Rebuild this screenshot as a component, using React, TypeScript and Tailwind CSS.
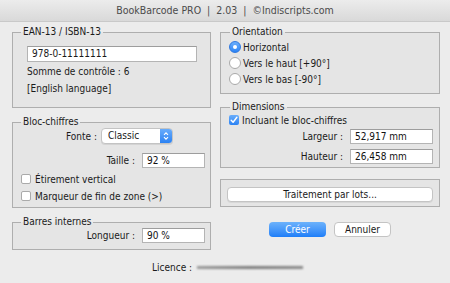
import React from "react";

const font = { fontFamily: '"DejaVu Sans Condensed", "DejaVu Sans", sans-serif' };

function TextBox({ value, w }: { value: string; w: string }) {
  return (
    <div
      className={`${w} h-[15px] border border-[#b4b4b4] border-t-[#9d9d9d] bg-white pl-[4px] text-[10px] leading-[13px] text-[#111]`}
    >
      {value}
    </div>
  );
}

function Radio({ on }: { on?: boolean }) {
  return on ? (
    <div className="flex h-[12px] w-[12px] items-center justify-center rounded-full border border-[#2e78e0] bg-gradient-to-b from-[#6aaefc] to-[#2a84f5]">
      <div className="h-[4px] w-[4px] rounded-full bg-white" />
    </div>
  ) : (
    <div className="h-[12px] w-[12px] rounded-full border border-[#a9a9a9] bg-white" />
  );
}

function Check({ on }: { on?: boolean }) {
  return on ? (
    <div className="flex h-[10px] w-[10px] items-center justify-center rounded-[2px] bg-gradient-to-b from-[#69adfb] to-[#2a82f3]">
      <svg width="8" height="8" viewBox="0 0 8 8">
        <path d="M1.2 4.2 L3.1 6.2 L6.9 1.3" stroke="white" strokeWidth="1.4" fill="none" strokeLinecap="round" strokeLinejoin="round" />
      </svg>
    </div>
  ) : (
    <div className="h-[10px] w-[10px] rounded-[2px] border border-[#aaaaaa] bg-white" />
  );
}

function Legend({ children, ml }: { children: React.ReactNode; ml: string }) {
  return (
    <legend className={`${ml} px-[2px] text-[10px] leading-[14px] text-[#1a1a1a]`}>{children}</legend>
  );
}

export default function App() {
  return (
    <div className="h-[283px] w-[450px] overflow-hidden bg-[#ececec] text-[#1a1a1a]" style={font}>
      <div className="flex h-[22px] items-center justify-center border-b border-[#c9c9c9] bg-gradient-to-b from-[#ececec] to-[#d9d9d9] text-[10.5px] text-[#4b4b4b]">
        BookBarcode PRO &nbsp;|&nbsp; 2.03 &nbsp;|&nbsp; ©Indiscripts.com
      </div>
      <div className="flex gap-[9px] pl-[12px] pt-[3px]">
        {/* Left column */}
        <div className="flex w-[199px] flex-col gap-[7px]">
          <fieldset className="h-[83px] border border-[#aeaeae] bg-[#e5e5e5]">
            <Legend ml="ml-[8px]">EAN-13 / ISBN-13</Legend>
            <div className="ml-[14px] mt-[7px]">
              <div className="h-[16px] w-[170px] border border-[#b4b4b4] border-t-[#9d9d9d] bg-white pl-[4px] text-[10px] leading-[14px]">
                978-0-11111111
              </div>
              <div className="mt-[2px] text-[10px] leading-[16px]">Somme de contrôle : 6</div>
              <div className="mt-[1px] text-[10px] leading-[16px]">[English language]</div>
            </div>
          </fieldset>
          <fieldset className="h-[93px] border border-[#aeaeae] bg-[#e5e5e5]">
            <Legend ml="ml-[8px]">Bloc-chiffres</Legend>
            <div className="-mt-[1px] flex items-center">
              <div className="w-[84px] text-right text-[10px]">Fonte :</div>
              <div className="ml-[4px] flex h-[16px] w-[72px] overflow-hidden rounded-[4px] border border-[#c3c3c3] bg-white shadow-[0_1px_0_rgba(0,0,0,0.08)]">
                <div className="flex-1 pl-[6px] text-[10px] leading-[14px]">Classic</div>
                <div className="flex w-[12px] items-center justify-center bg-gradient-to-b from-[#68acfb] to-[#2a82f3]">
                  <svg width="6" height="10" viewBox="0 0 6 10">
                    <path d="M1 3.8 L3 1.8 L5 3.8 M1 6.2 L3 8.2 L5 6.2" stroke="white" strokeWidth="1.1" fill="none" />
                  </svg>
                </div>
              </div>
            </div>
            <div className="mt-[9px] flex items-center justify-end pr-[5px]">
              <div className="text-[10px]">Taille :</div>
              <div className="ml-[7px]">
                <TextBox value="92 %" w="w-[63px]" />
              </div>
            </div>
            <div className="ml-[8px] mt-[3px] flex h-[16px] items-center gap-[4px] text-[10px]">
              <Check />
              <span>Étirement vertical</span>
            </div>
            <div className="ml-[8px] mt-[1px] flex h-[16px] items-center gap-[4px] text-[10px]">
              <Check />
              <span>Marqueur de fin de zone (&gt;)</span>
            </div>
          </fieldset>
          <fieldset className="h-[35px] border border-[#aeaeae] bg-[#e5e5e5]">
            <Legend ml="ml-[8px]">Barres internes</Legend>
            <div className="-mt-[1px] flex items-center justify-end pr-[5px]">
              <div className="text-[10px]">Longueur :</div>
              <div className="ml-[7px]">
                <TextBox value="90 %" w="w-[63px]" />
              </div>
            </div>
          </fieldset>
        </div>
        {/* Right column */}
        <div className="flex w-[220px] flex-col">
          <fieldset className="h-[69px] border border-[#aeaeae] bg-[#e5e5e5]">
            <Legend ml="ml-[9px]">Orientation</Legend>
            <div className="ml-[8px] flex h-[16px] items-center gap-[2px] text-[10px]">
              <Radio on />
              <span>Horizontal</span>
            </div>
            <div className="ml-[8px] flex h-[16px] items-center gap-[2px] text-[10px]">
              <Radio />
              <span>Vers le haut [+90°]</span>
            </div>
            <div className="ml-[8px] flex h-[16px] items-center gap-[2px] text-[10px]">
              <Radio />
              <span>Vers le bas [-90°]</span>
            </div>
          </fieldset>
          <fieldset className="mt-[6px] h-[68px] border border-[#aeaeae] bg-[#e5e5e5]">
            <Legend ml="ml-[9px]">Dimensions</Legend>
            <div className="-mt-[2px] ml-[8px] flex h-[16px] items-center gap-[3px] text-[10px]">
              <Check on />
              <span>Incluant le bloc-chiffres</span>
            </div>
            <div className="mt-[1px] flex items-center justify-end pr-[6px]">
              <div className="text-[10px]">Largeur :</div>
              <div className="ml-[7px]">
                <TextBox value="52,917 mm" w="w-[83px]" />
              </div>
            </div>
            <div className="mt-[5px] flex items-center justify-end pr-[6px]">
              <div className="text-[10px]">Hauteur :</div>
              <div className="ml-[7px]">
                <TextBox value="26,458 mm" w="w-[83px]" />
              </div>
            </div>
          </fieldset>
          <div className="mt-[11px] h-[28px] border border-[#aeaeae] bg-[#e5e5e5] px-[6px] pt-[7px]">
            <div className="flex h-[15px] items-center justify-center rounded-[4px] border border-[#c4c4c4] bg-white text-[10px] shadow-[0_1px_0_rgba(0,0,0,0.06)]">
              Traitement par lots...
            </div>
          </div>
          <div className="mt-[15px] flex justify-center gap-[8px]">
            <div className="flex h-[15px] w-[57px] items-center justify-center rounded-[4px] bg-gradient-to-b from-[#6cb2fb] to-[#1d7ef8] text-[10px] text-white">
              Créer
            </div>
            <div className="flex h-[15px] w-[57px] items-center justify-center rounded-[4px] border border-[#c4c4c4] bg-white text-[10px]">
              Annuler
            </div>
          </div>
        </div>
      </div>
      <div className="mt-[9px] flex h-[16px] items-center pl-[152px] text-[10px]">
        <span>Licence :</span>
        <div className="ml-[5px] h-[3px] w-[106px] bg-gradient-to-r from-[#9a9a9a] via-[#7d7d7d] to-[#8a8a8a] blur-[1px]" />
      </div>
    </div>
  );
}
